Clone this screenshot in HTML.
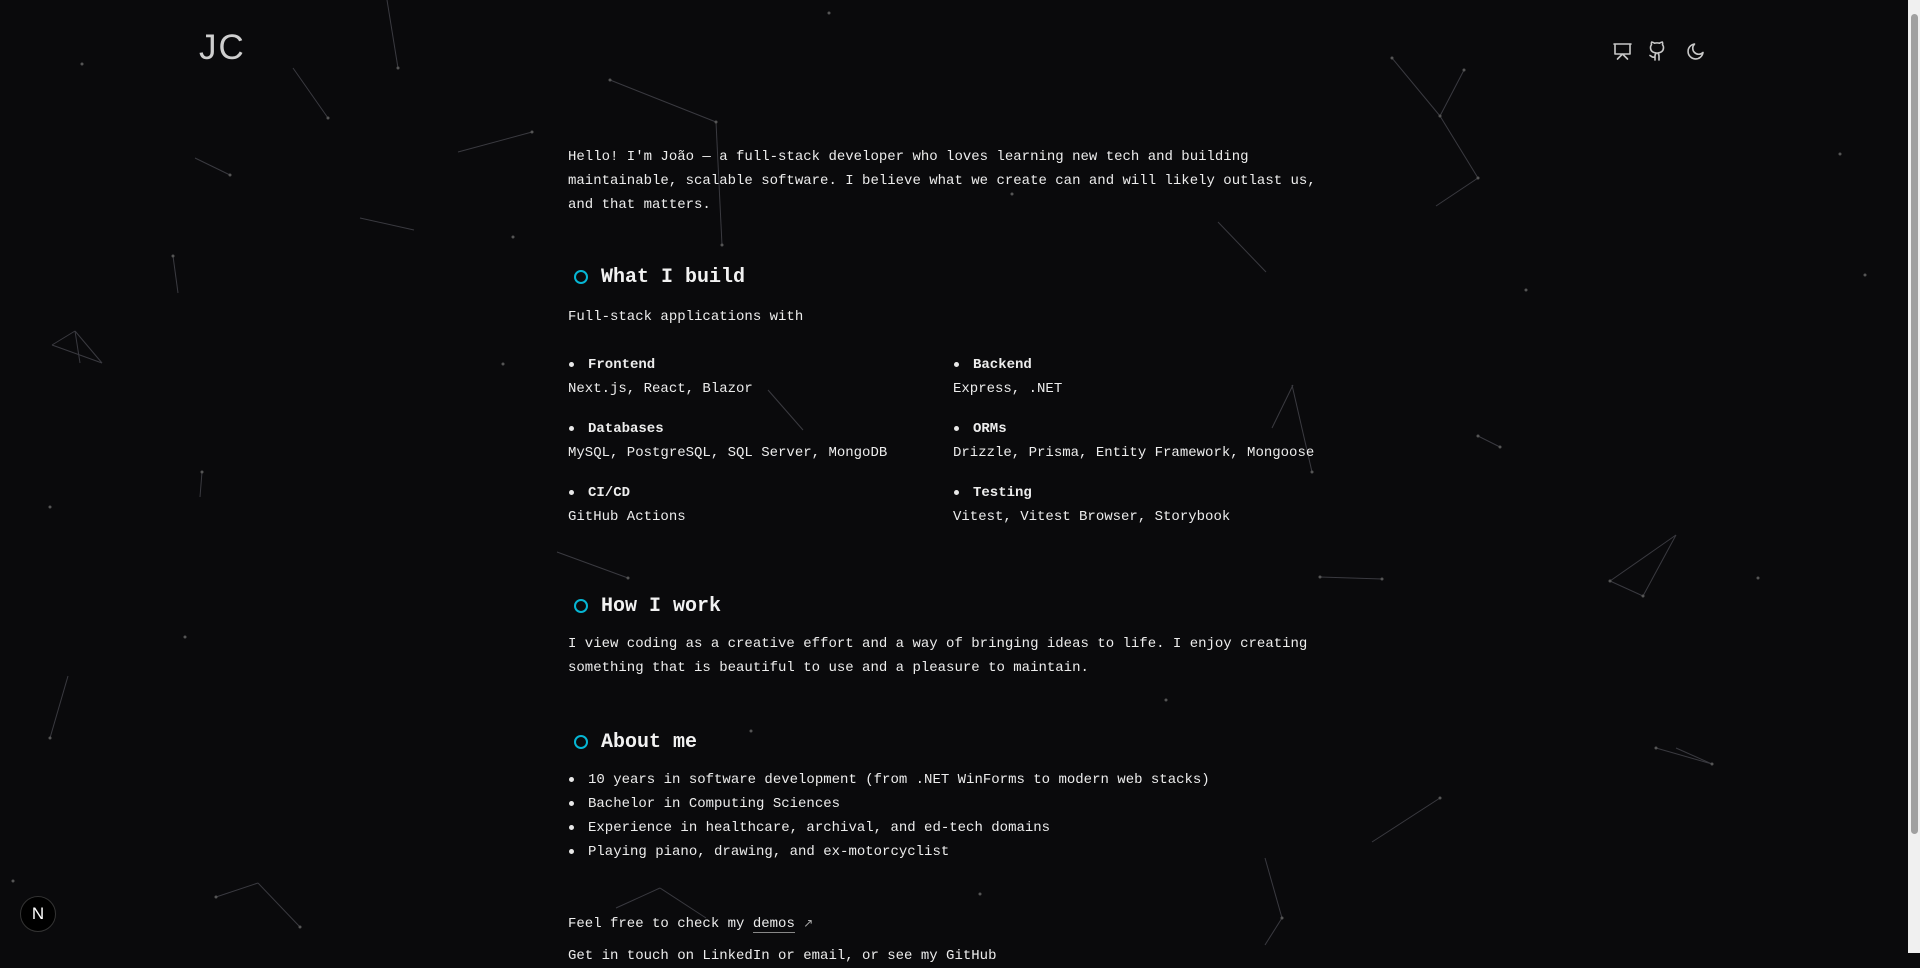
<!DOCTYPE html>
<html><head><meta charset="utf-8"><style>
html,body{margin:0;padding:0;background:#0a0a0c;width:1920px;height:953px;overflow:hidden;color:#ededed;font-family:"Liberation Mono",monospace;}
#bg{position:absolute;left:0;top:0}
.abs{position:absolute}
.logo{left:199px;top:28px;font-family:"Liberation Sans",sans-serif;font-weight:300;font-size:35px;color:#cfcfcf;letter-spacing:2px}
.t{position:absolute;left:568px;font-size:14px;line-height:24px;white-space:nowrap;top:1px}
h2{position:absolute;left:568px;margin:0;font-size:20px;font-weight:bold;line-height:24px;color:#f2f2f2;padding-left:33px}
h2:before{content:"";position:absolute;left:6px;top:4px;width:10px;height:10px;border:2px solid #06b6d4;border-radius:50%}
.li{position:absolute;font-size:14px;line-height:24px;white-space:nowrap;padding-left:20px}
.li:before{content:"";position:absolute;left:1px;top:9px;width:5px;height:5px;background:#e8e8e8;border-radius:50%}
b{font-weight:bold}
.sb{position:absolute;right:0;top:0;width:12px;height:953px;background:#f0f0f0}
.sb div{position:absolute;left:3px;top:14px;width:7px;height:820px;background:#a0a0a0;border-radius:4px}
</style></head><body>
<svg id="bg" width="1908" height="953" stroke="#3a3a40" stroke-width="1" fill="#555">
<g>
<line x1="387" y1="0" x2="398" y2="68"/><line x1="293" y1="68" x2="328" y2="118"/><line x1="195" y1="158" x2="230" y2="175"/>
<line x1="610" y1="80" x2="716" y2="122"/><line x1="716" y1="122" x2="722" y2="245"/><line x1="458" y1="152" x2="532" y2="132"/>
<line x1="360" y1="218" x2="414" y2="230"/><line x1="173" y1="256" x2="178" y2="293"/>
<line x1="52" y1="345" x2="75" y2="331"/><line x1="75" y1="331" x2="102" y2="363"/><line x1="52" y1="345" x2="102" y2="363"/><line x1="75" y1="331" x2="80" y2="363"/>
<line x1="1392" y1="58" x2="1440" y2="116"/><line x1="1464" y1="70" x2="1440" y2="116"/><line x1="1440" y1="116" x2="1478" y2="178"/><line x1="1478" y1="178" x2="1436" y2="206"/>
<line x1="1218" y1="222" x2="1266" y2="272"/><line x1="1293" y1="385" x2="1272" y2="428"/><line x1="1292" y1="385" x2="1312" y2="472"/>
<line x1="768" y1="390" x2="803" y2="430"/><line x1="557" y1="552" x2="628" y2="578"/><line x1="1320" y1="577" x2="1382" y2="579"/>
<line x1="1610" y1="581" x2="1676" y2="535"/><line x1="1610" y1="581" x2="1643" y2="596"/><line x1="1676" y1="535" x2="1643" y2="596"/>
<line x1="1478" y1="436" x2="1500" y2="447"/><line x1="1656" y1="748" x2="1712" y2="764"/><line x1="1676" y1="748" x2="1712" y2="764"/>
<line x1="50" y1="738" x2="68" y2="676"/><line x1="202" y1="472" x2="200" y2="497"/><line x1="216" y1="897" x2="258" y2="883"/><line x1="258" y1="883" x2="300" y2="927"/>
<line x1="1265" y1="858" x2="1282" y2="918"/><line x1="1282" y1="918" x2="1265" y2="945"/><line x1="1372" y1="842" x2="1440" y2="798"/>
<line x1="616" y1="908" x2="660" y2="888"/><line x1="660" y1="888" x2="706" y2="918"/>
</g>
<g stroke="none">
<circle cx="82" cy="64" r="1.5"/><circle cx="398" cy="68" r="1.5"/><circle cx="328" cy="118" r="1.5"/><circle cx="230" cy="175" r="1.5"/><circle cx="829" cy="13" r="1.5"/><circle cx="716" cy="122" r="1.5"/><circle cx="610" cy="80" r="1.5"/><circle cx="532" cy="132" r="1.5"/><circle cx="722" cy="245" r="1.5"/><circle cx="1012" cy="194" r="1.5"/><circle cx="1526" cy="290" r="1.5"/><circle cx="1440" cy="116" r="1.5"/><circle cx="1478" cy="178" r="1.5"/><circle cx="1464" cy="70" r="1.5"/><circle cx="1392" cy="58" r="1.5"/><circle cx="1840" cy="154" r="1.5"/><circle cx="1865" cy="275" r="1.5"/><circle cx="513" cy="237" r="1.5"/><circle cx="173" cy="256" r="1.5"/><circle cx="503" cy="364" r="1.5"/><circle cx="1312" cy="472" r="1.5"/><circle cx="1500" cy="447" r="1.5"/><circle cx="1478" cy="436" r="1.5"/><circle cx="202" cy="472" r="1.5"/><circle cx="50" cy="507" r="1.5"/><circle cx="628" cy="578" r="1.5"/><circle cx="1382" cy="579" r="1.5"/><circle cx="1320" cy="577" r="1.5"/><circle cx="1610" cy="581" r="1.5"/><circle cx="1643" cy="596" r="1.5"/><circle cx="1758" cy="578" r="1.5"/><circle cx="185" cy="637" r="1.5"/><circle cx="1166" cy="700" r="1.5"/><circle cx="50" cy="738" r="1.5"/><circle cx="751" cy="731" r="1.5"/><circle cx="1712" cy="764" r="1.5"/><circle cx="1656" cy="748" r="1.5"/><circle cx="216" cy="897" r="1.5"/><circle cx="300" cy="927" r="1.5"/><circle cx="1282" cy="918" r="1.5"/><circle cx="980" cy="894" r="1.5"/><circle cx="13" cy="881" r="1.5"/><circle cx="1440" cy="798" r="1.5"/>
</g>
</svg>

<div class="abs logo">JC</div>
<svg class="abs" style="left:1612px;top:41px" width="100" height="22" fill="none" stroke="#c8c8c8" stroke-width="1.6" stroke-linecap="round" stroke-linejoin="round">
<path d="M2 3h17M3 3v10h15V3M10.5 13l-5 5M10.5 13l5 5"/>
<path d="M43 19v-4c0-1.5.5-2.3 1.5-3-3.5-.3-6-1.8-6-5.5 0-1 .4-2 1-2.8-.2-.8-.2-1.8.2-2.7 0 0 1 0 2.8 1.2a10 10 0 0 1 5 0C49.3 1 50.3 1 50.3 1c.4.9.4 1.9.2 2.7.6.8 1 1.8 1 2.8 0 3.7-2.5 5.2-6 5.5 1 .7 1.5 1.6 1.5 3V19M43 16c-3 1-3.5-1-5-1.5"/>
<path d="M91 11.5A7.5 7.5 0 1 1 82.5 3 5.8 5.8 0 0 0 91 11.5z"/>
</svg>

<div class="t" style="top:145px">Hello! I'm João — a full-stack developer who loves learning new tech and building<br>maintainable, scalable software. I believe what we create can and will likely outlast us,<br>and that matters.</div>

<h2 style="top:266px">What I build</h2>
<div class="t" style="top:305px">Full-stack applications with</div>

<div class="li" style="left:568px;top:353px"><b>Frontend</b></div>
<div class="t" style="top:377px">Next.js, React, Blazor</div>
<div class="li" style="left:953px;top:353px"><b>Backend</b></div>
<div class="t" style="left:953px;top:377px">Express, .NET</div>
<div class="li" style="left:568px;top:417px"><b>Databases</b></div>
<div class="t" style="top:441px">MySQL, PostgreSQL, SQL Server, MongoDB</div>
<div class="li" style="left:953px;top:417px"><b>ORMs</b></div>
<div class="t" style="left:953px;top:441px">Drizzle, Prisma, Entity Framework, Mongoose</div>
<div class="li" style="left:568px;top:481px"><b>CI/CD</b></div>
<div class="t" style="top:505px">GitHub Actions</div>
<div class="li" style="left:953px;top:481px"><b>Testing</b></div>
<div class="t" style="left:953px;top:505px">Vitest, Vitest Browser, Storybook</div>

<h2 style="top:595px">How I work</h2>
<div class="t" style="top:632px">I view coding as a creative effort and a way of bringing ideas to life. I enjoy creating<br>something that is beautiful to use and a pleasure to maintain.</div>

<h2 style="top:731px">About me</h2>
<div class="li" style="left:568px;top:768px">10 years in software development (from .NET WinForms to modern web stacks)</div>
<div class="li" style="left:568px;top:792px">Bachelor in Computing Sciences</div>
<div class="li" style="left:568px;top:816px">Experience in healthcare, archival, and ed-tech domains</div>
<div class="li" style="left:568px;top:840px">Playing piano, drawing, and ex-motorcyclist</div>

<div class="t" style="top:912px">Feel free to check my <span style="border-bottom:1px solid #888">demos</span> <span style="color:#aaa;font-size:12px">↗</span></div>
<div class="t" style="top:944px">Get in touch on LinkedIn or email, or see my GitHub</div>

<div class="abs" style="left:20px;top:896px;width:34px;height:34px;border-radius:50%;background:#000;border:1px solid #333;color:#fff;font-family:'Liberation Sans',sans-serif;font-size:17px;line-height:34px;text-align:center">N</div>

<div class="sb"><div></div></div>
</body></html>
